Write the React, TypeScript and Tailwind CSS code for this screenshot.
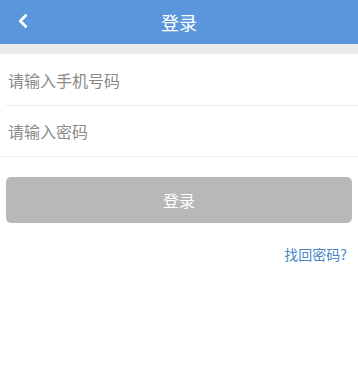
import { ChevronLeft } from "lucide-react";

const font = { fontFamily: '"Noto Sans CJK SC", "Noto Sans", sans-serif' };

export default function App() {
  return (
    <div className="w-[358px] h-[390px] bg-white flex flex-col" style={font}>
      {/* Header */}
      <div className="h-[44px] bg-[#5996dc] flex items-center relative shrink-0">
        <button className="absolute left-[12px] top-[10px] text-white">
          <ChevronLeft size={22} strokeWidth={3} />
        </button>
        <h1 className="w-full text-center text-white text-[18px]">登录</h1>
      </div>
      <div className="h-[10px] bg-[#ebebeb] shrink-0" />

      {/* Inputs */}
      <div className="flex flex-col">
        <div className="ml-[6px] h-[52px] border-b border-[#ececec] flex items-center">
          <input
            className="w-full pl-[2px] text-[16px] text-[#333] placeholder:text-[#8a8a8a] outline-none bg-transparent"
            placeholder="请输入手机号码"
          />
        </div>
        <div className="h-[51px] border-b border-[#ececec] flex items-center pl-[8px]">
          <input
            type="password"
            className="w-full text-[16px] text-[#333] placeholder:text-[#8a8a8a] outline-none bg-transparent"
            placeholder="请输入密码"
          />
        </div>
      </div>

      {/* Submit */}
      <div className="px-[6px] pt-[20px]">
        <button className="w-full h-[46px] rounded-[5px] bg-[#b8b8b8] text-white text-[16px]">登录</button>
      </div>

      <div className="flex justify-end pr-[11px] pt-[21px]">
        <a className="text-[14px] text-[#4a86c4]">找回密码?</a>
      </div>
    </div>
  );
}
